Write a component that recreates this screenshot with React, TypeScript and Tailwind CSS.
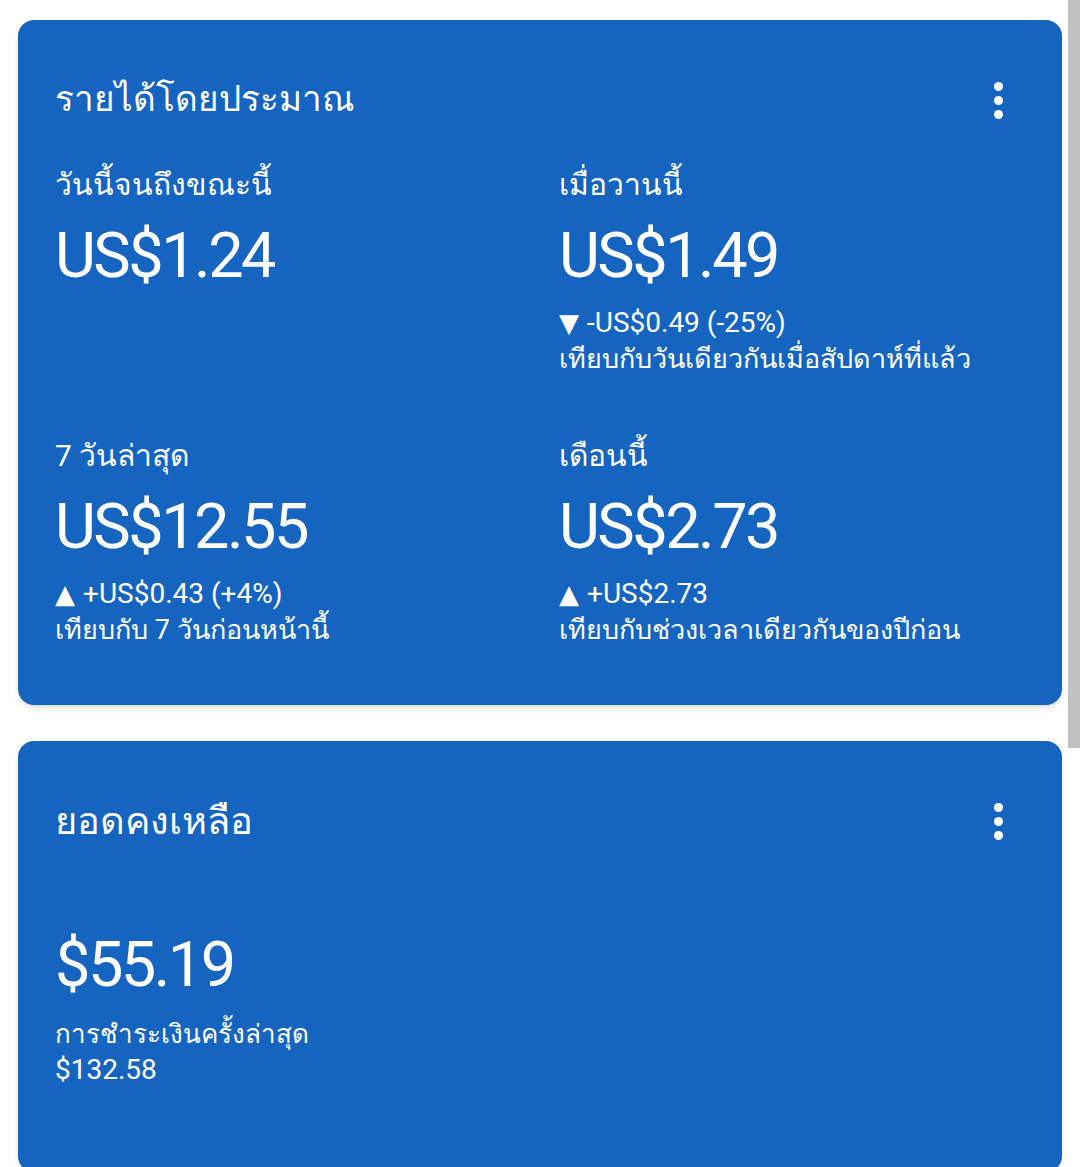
import React from 'react';

type Stat = {
  label: string;
  amount: string;
  change?: string;
  up?: boolean;
  compare?: string;
};

const stats: Stat[] = [
  { label: 'วันนี้จนถึงขณะนี้', amount: 'US$1.24' },
  {
    label: 'เมื่อวานนี้',
    amount: 'US$1.49',
    change: '-US$0.49 (-25%)',
    up: false,
    compare: 'เทียบกับวันเดียวกันเมื่อสัปดาห์ที่แล้ว',
  },
  {
    label: '7 วันล่าสุด',
    amount: 'US$12.55',
    change: '+US$0.43 (+4%)',
    up: true,
    compare: 'เทียบกับ 7 วันก่อนหน้านี้',
  },
  {
    label: 'เดือนนี้',
    amount: 'US$2.73',
    change: '+US$2.73',
    up: true,
    compare: 'เทียบกับช่วงเวลาเดียวกันของปีก่อน',
  },
];

function MoreButton() {
  return (
    <button className="flex flex-col items-center gap-[5px] w-[24px] mr-[52px]">
      <span className="block w-[9px] h-[9px] rounded-full bg-white" />
      <span className="block w-[9px] h-[9px] rounded-full bg-white" />
      <span className="block w-[9px] h-[9px] rounded-full bg-white" />
    </button>
  );
}

function StatBlock({ stat }: { stat: Stat }) {
  return (
    <div className="flex flex-col">
      <div className="text-[30px] leading-[40px]">{stat.label}</div>
      <div className="mt-[15px] text-[63px] leading-[72px] tracking-[-2.5px]">{stat.amount}</div>
      {stat.change && (
        <div className="mt-[13px] leading-[36px]">
          <div className="text-[28px] flex items-center">
            <span className="text-[26px] mr-[8px] w-[20px]">{stat.up ? '▲' : '▼'}</span>
            {stat.change}
          </div>
          <div className="text-[27px]">{stat.compare}</div>
        </div>
      )}
    </div>
  );
}

export default function App() {
  return (
    <div
      className="relative h-[1167px] overflow-hidden bg-white text-white"
      style={{ fontFamily: 'Roboto, "Noto Sans", "DejaVu Sans", sans-serif' }}
    >
      {/* Scrollbar thumb */}
      <div className="absolute right-0 top-0 w-[12px] h-[748px] bg-[#c1c1c1]" />

      <div className="flex flex-col gap-[36px] pt-[20px] ml-[18px] w-[1044px]">
        {/* Estimated earnings */}
        <div className="rounded-[16px] bg-[#1565c0] shadow-md pl-[37px] pt-[56px] pb-[57px]">
          <div className="flex items-center justify-between">
            <h2 className="text-[35px] leading-[48px]">รายได้โดยประมาณ</h2>
            <MoreButton />
          </div>
          <div className="grid grid-cols-[504px_1fr] mt-[41px] gap-y-[59px]">
            {stats.map((s) => (
              <StatBlock key={s.label} stat={s} />
            ))}
          </div>
        </div>

        {/* Balance */}
        <div className="rounded-[16px] bg-[#1565c0] shadow-md pl-[37px] pt-[56px] pb-[84px]">
          <div className="flex items-center justify-between">
            <h2 className="text-[38px] leading-[48px]">ยอดคงเหลือ</h2>
            <MoreButton />
          </div>
          <div className="mt-[84px] text-[63px] leading-[72px] tracking-[-2.5px]">$55.19</div>
          <div className="mt-[15px] leading-[36px]">
            <div className="text-[26px]">การชำระเงินครั้งล่าสุด</div>
            <div className="text-[28px]">$132.58</div>
          </div>
        </div>
      </div>
    </div>
  );
}
